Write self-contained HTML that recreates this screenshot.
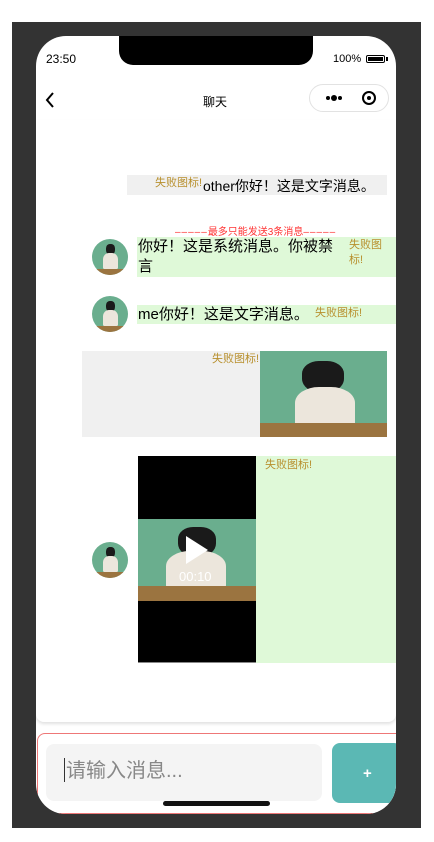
<!DOCTYPE html>
<html><head><meta charset="utf-8"><style>
*{margin:0;padding:0;box-sizing:border-box}
body{width:434px;height:842px;background:#fff;position:relative;overflow:hidden;font-family:"Liberation Sans","Noto Sans CJK SC",sans-serif}
.a{position:absolute}
.frame{left:12px;top:22px;width:409px;height:806px;background:#333}
.screen{left:36px;top:36px;width:360px;height:778px;background:#fff;border-radius:30px;overflow:hidden}
.fail{color:#b8902e;font-size:11px;line-height:13px}
.av{width:36px;height:36px;border-radius:50%;overflow:hidden}
.cat{background:#6aae8e;overflow:hidden}
.cat .h{position:absolute;background:#1a1a1a;border-radius:40% 40% 45% 45%}
.cat .b{position:absolute;background:#ece6dc;border-radius:40% 40% 10% 10%}
.cat .w{position:absolute;left:0;right:0;bottom:0;background:#9b7440}
.d{letter-spacing:1px}
</style></head><body>
<div class="a frame"></div>
<div class="a screen">
 <div class="a" style="left:10px;top:16px;font-size:12px">23:50</div>
 <div class="a" style="left:297px;top:17px;font-size:11px">100%</div>
 <div class="a" style="left:330px;top:19px;width:19px;height:8px;border:1px solid #000;border-radius:2px;padding:1px"><div style="width:100%;height:100%;background:#000"></div></div>
 <div class="a" style="left:350px;top:21px;width:2px;height:4px;background:#000"></div>
 <div class="a" style="left:83px;top:0;width:194px;height:29px;background:#000;border-radius:0 0 14px 14px"></div>
 <svg class="a" style="left:8px;top:56px" width="12" height="16"><path d="M9 1L3 8l6 7" stroke="#000" stroke-width="2" fill="none"/></svg>
 <div class="a" style="left:167px;top:57px;font-size:12px">聊天</div>
 <div class="a" style="left:273px;top:48px;width:80px;height:28px;border:1px solid #e2e2e2;border-radius:14px"></div>
 <div class="a" style="left:290px;top:60px;width:4px;height:4px;border-radius:50%;background:#000"></div>
 <div class="a" style="left:295px;top:59px;width:6px;height:6px;border-radius:50%;background:#000"></div>
 <div class="a" style="left:302px;top:60px;width:4px;height:4px;border-radius:50%;background:#000"></div>
 <div class="a" style="left:326px;top:55px;width:14px;height:14px;border:2px solid #000;border-radius:50%"></div>
 <div class="a" style="left:331px;top:60px;width:4px;height:4px;border-radius:50%;background:#000"></div>

 <div class="a" style="left:0;top:84px;width:360px;height:602px;background:#fff;border-radius:0 0 8px 8px;box-shadow:0 2px 3px rgba(0,0,0,.12)"></div>

 <div class="a" style="left:91px;top:139px;width:260px;height:20px;background:#f0f0f0"></div>
 <div class="a fail" style="left:119px;top:141px">失败图标!</div>
 <div class="a" style="left:167px;top:140px;font-size:14px">other你好！这是文字消息。</div>

 <div class="a" style="left:139px;top:187px;font-size:10px;color:#f33;white-space:nowrap"><span class="d">–––––</span>最多只能发送3条消息<span class="d">–––––</span></div>

 <div class="a av cat" style="left:56px;top:203px"><div class="h" style="left:14px;top:5px;width:9px;height:11px"></div><div class="b" style="left:11px;top:14px;width:15px;height:16px"></div><div class="w" style="height:6px"></div></div>
 <div class="a" style="left:101px;top:201px;width:260px;height:40px;background:#dff9d8"></div>
 <div class="a" style="left:102px;top:201px;font-size:15px;line-height:20px;width:200px">你好！这是系统消息。你被禁言</div>
 <div class="a fail" style="left:313px;top:202px;width:36px;line-height:15px">失败图标!</div>

 <div class="a av cat" style="left:56px;top:260px"><div class="h" style="left:14px;top:5px;width:9px;height:11px"></div><div class="b" style="left:11px;top:14px;width:15px;height:16px"></div><div class="w" style="height:6px"></div></div>
 <div class="a" style="left:101px;top:269px;width:260px;height:19px;background:#dff9d8"></div>
 <div class="a" style="left:102px;top:269px;font-size:15px;line-height:19px">me你好！这是文字消息。</div>
 <div class="a fail" style="left:279px;top:271px">失败图标!</div>

 <div class="a" style="left:46px;top:315px;width:305px;height:86px;background:#f0f0f0"></div>
 <div class="a fail" style="left:176px;top:317px">失败图标!</div>
 <div class="a cat" style="left:224px;top:315px;width:127px;height:86px"><div class="h" style="left:42px;top:10px;width:42px;height:32px"></div><div class="b" style="left:35px;top:36px;width:60px;height:40px"></div><div class="w" style="height:14px"></div></div>

 <div class="a av cat" style="left:56px;top:506px"><div class="h" style="left:14px;top:5px;width:9px;height:11px"></div><div class="b" style="left:11px;top:14px;width:15px;height:16px"></div><div class="w" style="height:6px"></div></div>
 <div class="a" style="left:220px;top:420px;width:140px;height:207px;background:#dff9d8"></div>
 <div class="a fail" style="left:229px;top:423px">失败图标!</div>
 <div class="a" style="left:102px;top:420px;width:118px;height:207px;background:#000;border-bottom:1px solid #888"></div>
 <div class="a cat" style="left:102px;top:483px;width:118px;height:82px"><div class="h" style="left:40px;top:8px;width:38px;height:30px"></div><div class="b" style="left:28px;top:32px;width:60px;height:38px"></div><div class="w" style="height:15px"></div></div>
 <svg class="a" style="left:148px;top:499px" width="26" height="30"><path d="M2 1L24 15L2 29Z" fill="#fff"/></svg>
 <div class="a" style="left:143px;top:533px;font-size:13px;color:#fff">00:10</div>

 <div class="a" style="left:1px;top:697px;width:370px;height:81px;border:1px solid #ee7777;border-radius:8px 0 0 0;background:#fff"></div>
 <div class="a" style="left:10px;top:708px;width:276px;height:57px;background:#f4f4f4;border-radius:8px"></div>
 <div class="a" style="left:28px;top:722px;width:1px;height:24px;background:#333"></div>
 <div class="a" style="left:30px;top:722px;font-size:20px;color:#888;line-height:26px">请输入消息...</div>
 <div class="a" style="left:296px;top:707px;width:70px;height:60px;background:#5bb8b4;border-radius:8px"></div>
 <div class="a" style="left:327px;top:729px;font-size:15px;color:#fff;font-weight:bold">+</div>
 <div class="a" style="left:127px;top:765px;width:107px;height:5px;background:#111;border-radius:3px"></div>
</div>
</body></html>
